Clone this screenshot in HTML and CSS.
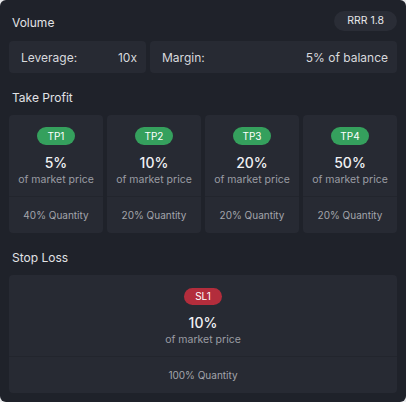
FILE: index.html
```html
<!DOCTYPE html>
<html>
<head>
<meta charset="utf-8">
<link rel="stylesheet" href="styles.css">
</head>
<body>
<div class="panel">
  <div class="header">
    <span class="title">Volume</span>
    <span class="rrr">RRR 1.8</span>
  </div>
  <div class="volume-row">
    <div class="vbox lev"><span>Leverage:</span><span>10x</span></div>
    <div class="vbox mar"><span>Margin:</span><span>5% of balance</span></div>
  </div>
  <div class="section-title">Take Profit</div>
  <div class="tp-grid">
    <div class="card">
      <div class="top"><span class="pill green">TP1</span><div class="val">5%</div><div class="sub">of market price</div></div>
      <div class="qty">40% Quantity</div>
    </div>
    <div class="card">
      <div class="top"><span class="pill green">TP2</span><div class="val">10%</div><div class="sub">of market price</div></div>
      <div class="qty">20% Quantity</div>
    </div>
    <div class="card">
      <div class="top"><span class="pill green">TP3</span><div class="val">20%</div><div class="sub">of market price</div></div>
      <div class="qty">20% Quantity</div>
    </div>
    <div class="card">
      <div class="top"><span class="pill green">TP4</span><div class="val">50%</div><div class="sub">of market price</div></div>
      <div class="qty">20% Quantity</div>
    </div>
  </div>
  <div class="section-title">Stop Loss</div>
  <div class="card sl">
    <div class="top"><span class="pill red">SL1</span><div class="val">10%</div><div class="sub">of market price</div></div>
    <div class="qty">100% Quantity</div>
  </div>
</div>
</body>
</html>
```
FILE: styles.css
```css
* { box-sizing: border-box; }
html, body { margin: 0; padding: 0; background: #e9eaec; }
body { font-family: Inter, "Noto Sans", sans-serif; }
.panel {
  width: 406px;
  height: 402px;
  background: #1f222a;
  border-radius: 6px;
  padding: 11px 9px 9px;
  color: #e4e5e8;
}
.header {
  display: flex;
  justify-content: space-between;
  align-items: center;
  height: 20px;
  padding-left: 3px;
}
.title, .section-title { font-size: 12px; line-height: 16px; color: #e2e3e6; }
.header .title { padding-top: 4px; }
.rrr {
  background: #2a2d36;
  border-radius: 10px;
  height: 20px;
  line-height: 20px;
  padding: 0 13px;
  font-size: 10.5px;
  font-weight: 400;
  color: #e4e5e8;
}
.volume-row {
  display: flex;
  gap: 4px;
  margin-top: 10px;
}
.vbox {
  height: 32px;
  background: #272a33;
  border-radius: 4px;
  display: flex;
  justify-content: space-between;
  align-items: center;
  padding: 0 9px 0 12px;
  font-size: 12px;
  color: #d8d9dd;
}
.lev { width: 137px; }
.mar { flex: 1; }
.section-title { margin: 17px 0 9px; padding-left: 3px; }
.tp-grid {
  display: grid;
  grid-template-columns: repeat(4, 1fr);
  gap: 4px;
}
.card {
  background: #272a33;
  border-radius: 4px;
  height: 118px;
  display: flex;
  flex-direction: column;
  text-align: center;
}
.top {
  height: 82px;
  padding-top: 12px;
  display: flex;
  flex-direction: column;
  align-items: center;
  border-bottom: 1px solid #22252d;
}
.sl .top { padding-top: 13px; }
.pill {
  display: inline-block;
  height: 18px;
  line-height: 18px;
  width: 38px;
  border-radius: 9px;
  font-size: 10px;
  font-weight: 400;
  color: #ffffff;
}
.sl .pill { height: 17px; line-height: 17px; }
.green { background: #35a05d; }
.red { background: #b32d3c; }
.val { margin-top: 9px; font-size: 14px; line-height: 18px; font-weight: 500; color: #f0f1f3; }
.sub { font-size: 10.5px; line-height: 15px; color: #9b9da4; }
.qty { flex: 1; display: flex; align-items: center; justify-content: center; font-size: 10px; color: #a3a5ab; padding-bottom: 1px; }
```
